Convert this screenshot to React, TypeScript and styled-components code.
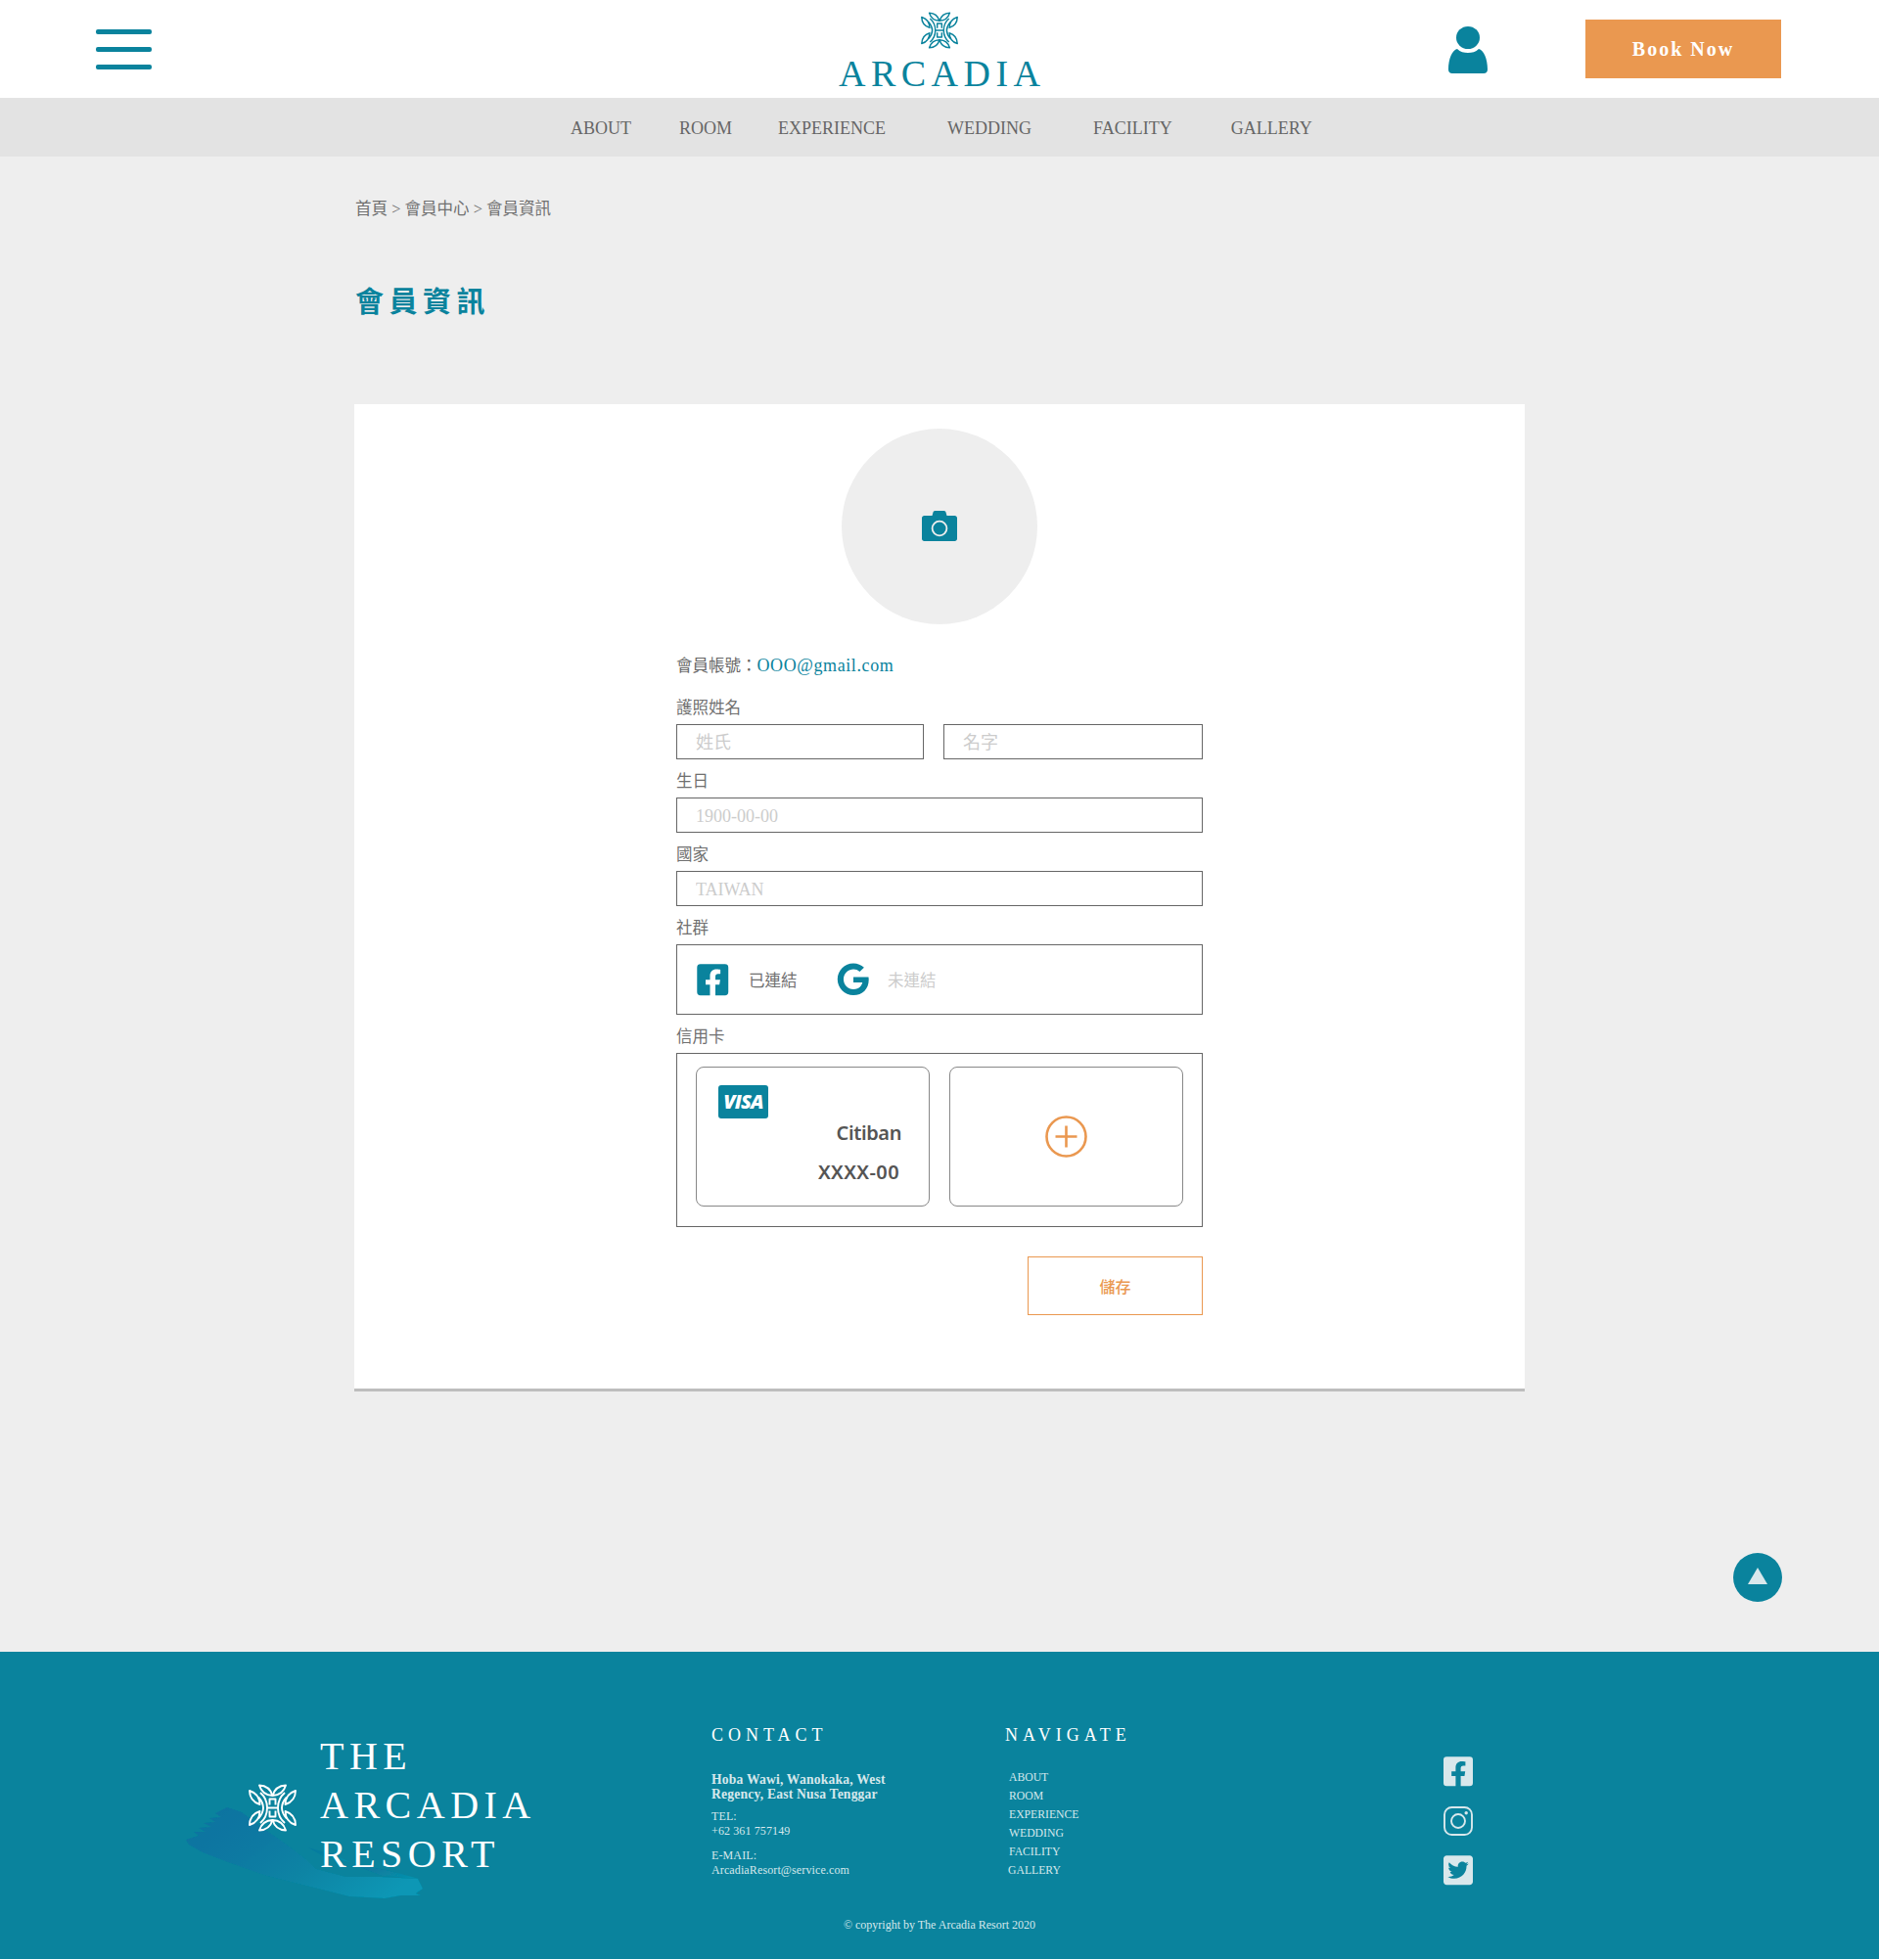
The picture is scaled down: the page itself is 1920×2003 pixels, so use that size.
import React from "react";
import styled, { createGlobalStyle } from "styled-components";
import { FaFacebookSquare, FaGoogle, FaTwitterSquare } from "react-icons/fa";

const TEAL = "#0a839d";
const ORANGE = "#ea9850";
const SERIF = `"Liberation Serif", "Noto Sans CJK TC", serif`;

const Global = createGlobalStyle`
  html, body { margin: 0; padding: 0; background: #fff; }
  * { box-sizing: border-box; }
  body { font-family: ${SERIF}; color: #666; }
`;

const Header = styled.header`
  height: 100px;
  background: #fff;
  display: grid;
  grid-template-columns: 1fr auto 1fr;
  align-items: center;
`;
const Burger = styled.div`
  margin-left: 98px;
  width: 57px;
  display: flex;
  flex-direction: column;
  gap: 13px;
  margin-top: 1px;
`;
const BurgerBar = styled.span`
  display: block;
  height: 5px;
  border-radius: 2px;
  background: ${TEAL};
`;
const Logo = styled.div`
  width: 206px;
  height: 100px;
  padding-top: 12px;
  display: flex;
  flex-direction: column;
  align-items: center;
  color: ${TEAL};
`;
const LogoText = styled.div`
  font-size: 38px;
  line-height: 38px;
  letter-spacing: 5.5px;
  margin-right: -5.5px;
  margin-top: 6px;
  white-space: nowrap;
`;
const HeaderRight = styled.div`
  display: flex;
  justify-content: flex-end;
  align-items: center;
  padding-right: 100px;
  gap: 100px;
`;
const UserWrap = styled.div`
  line-height: 0;
  margin-top: 2px;
`;
const BookNow = styled.a`
  width: 200px;
  height: 60px;
  background: ${ORANGE};
  color: #fff;
  font-size: 20px;
  font-weight: 700;
  letter-spacing: 2px;
  display: flex;
  align-items: center;
  justify-content: center;
`;
const NavBar = styled.nav`
  height: 60px;
  background: #e3e3e3;
  display: flex;
  align-items: center;
  padding-left: 583px;
  padding-top: 2px;
`;
const NavLink = styled.a<{ $gap: number }>`
  margin-left: ${(p) => p.$gap}px;
  font-size: 18px;
  color: #666;
  white-space: nowrap;
`;
const Main = styled.main`
  background: #eee;
  height: 1528px;
  display: flex;
  flex-direction: column;
  padding-top: 44px;
`;
const Container = styled.div`
  width: 1196px;
  margin: 0 auto;
`;
const Crumb = styled.div`
  font-size: 16.5px;
  line-height: 20px;
  color: #707070;
  padding-left: 1px;
`;
const Title = styled.h1`
  margin: 65px 0 84px 1px;
  font-size: 29px;
  line-height: 40px;
  letter-spacing: 5.5px;
  font-weight: 700;
  color: ${TEAL};
`;
const Card = styled.section`
  height: 1009px;
  background: #fff;
  border-bottom: 3px solid #bdbdbd;
  padding-top: 25px;
`;
const Avatar = styled.div`
  width: 200px;
  height: 200px;
  border-radius: 50%;
  background: #eee;
  margin: 0 auto;
  display: flex;
  align-items: center;
  justify-content: center;
  padding-bottom: 1px;
`;
const Form = styled.form`
  width: 538px;
  margin: 30px auto 0;
`;
const Account = styled.div`
  height: 24px;
  font-size: 16.5px;
  line-height: 24px;
  margin-bottom: 19px;
`;
const Email = styled.span`
  color: ${TEAL};
  font-size: 18px;
  letter-spacing: 0.6px;
`;
const Field = styled.div`
  margin-bottom: 10px;
`;
const Label = styled.div`
  font-size: 16.5px;
  line-height: 25px;
  height: 24px;
  margin-bottom: 5px;
  color: #707070;
`;
const Row = styled.div`
  display: flex;
  gap: 20px;
`;
const Input = styled.input<{ $w?: number }>`
  display: block;
  width: ${(p) => (p.$w ? `${p.$w}px` : "100%")};
  flex: ${(p) => (p.$w ? "none" : "1")};
  height: 36px;
  border: 1px solid #666;
  border-radius: 0;
  padding: 2px 19px 0;
  font-family: ${SERIF};
  font-size: 18px;
  outline: none;
  background: #fff;
  &::placeholder { color: #ccc; opacity: 1; }
`;
const SocialBox = styled.div`
  height: 72px;
  border: 1px solid #666;
  padding-left: 18px;
  display: flex;
  align-items: center;
  color: ${TEAL};
`;
const SocialStatus = styled.span<{ $off?: boolean; $gap: number; $after: number }>`
  font-size: 16.5px;
  margin-left: ${(p) => p.$gap}px;
  margin-right: ${(p) => p.$after}px;
  color: ${(p) => (p.$off ? "#ccc" : "#707070")};
`;
const CreditBox = styled.div`
  height: 178px;
  border: 1px solid #666;
  padding: 13px 19px 20px;
  display: flex;
  gap: 20px;
`;
const CreditCard = styled.div`
  width: 239px;
  height: 143px;
  border: 1px solid #888;
  border-radius: 8px;
  padding: 18px 0 0 22px;
  font-family: "Noto Sans", sans-serif;
  font-weight: 600;
  color: #555;
  font-size: 20px;
  line-height: 24px;
`;
const AddCard = styled(CreditCard)`
  padding: 0 0 1px;
  display: flex;
  align-items: center;
  justify-content: center;
`;
const Visa = styled.div`
  width: 51px;
  height: 34px;
  border-radius: 3px;
  background: ${TEAL};
  color: #fff;
  font-family: "Open Sans", sans-serif;
  font-weight: 800;
  font-style: italic;
  font-size: 20px;
  line-height: 34px;
  text-align: center;
  letter-spacing: -0.8px;
`;
const CardLine = styled.div<{ $top: number; $right: number; $ls: number }>`
  text-align: right;
  margin-top: ${(p) => p.$top}px;
  margin-right: ${(p) => p.$right}px;
  letter-spacing: ${(p) => p.$ls}px;
`;
const SaveRow = styled.div`
  display: flex;
  justify-content: flex-end;
  margin-top: 30px;
`;
const Save = styled.button`
  width: 179px;
  height: 60px;
  background: #fff;
  border: 1px solid ${ORANGE};
  color: ${ORANGE};
  font-family: ${SERIF};
  font-size: 16px;
  font-weight: 500;
`;
const ToTopRow = styled.div`
  display: flex;
  justify-content: flex-end;
  padding-right: 99px;
  margin-top: 165px;
`;
const ToTop = styled.a`
  width: 50px;
  height: 50px;
  border-radius: 50%;
  background: ${TEAL};
  display: flex;
  align-items: center;
  justify-content: center;
  padding-bottom: 4px;
`;
const Footer = styled.footer`
  position: relative;
  height: 314px;
  background: ${TEAL};
  color: #d6e8ec;
  padding-top: 73px;
  overflow: hidden;
`;
const Brush = styled.svg`
  position: absolute;
  left: 190px;
  top: 157px;
`;
const FooterRow = styled.div`
  position: relative;
  height: 195px;
  display: flex;
`;
const Brand = styled.div`
  width: 473px;
  margin-left: 254px;
  height: 150px;
  margin-top: 9px;
  display: flex;
  align-items: center;
  gap: 24px;
  color: #fff;
`;
const BrandMark = styled.div`
  margin-top: 5px;
  line-height: 0;
`;
const BrandText = styled.div`
  font-size: 40px;
  line-height: 50px;
  letter-spacing: 5.5px;
`;
const Column = styled.div<{ $w: number }>`
  width: ${(p) => p.$w}px;
`;
const FootHead = styled.div`
  font-size: 18px;
  line-height: 24px;
  letter-spacing: 5px;
  color: #fff;
  white-space: nowrap;
`;
const Address = styled.div`
  margin-top: 26px;
  font-size: 13.6px;
  font-weight: 700;
  line-height: 15px;
  letter-spacing: 0.2px;
`;
const Info = styled.div<{ $top: number }>`
  margin-top: ${(p) => p.$top}px;
  font-size: 12px;
  line-height: 15px;
  letter-spacing: 0.12px;
`;
const FootNav = styled.div`
  margin-top: 22px;
  padding-left: 4px;
`;
const FootLink = styled.div<{ $shift?: number }>`
  font-size: 11.7px;
  line-height: 19px;
  margin-left: ${(p) => p.$shift ?? 0}px;
`;
const Socials = styled.div`
  margin-top: 34px;
  display: flex;
  flex-direction: column;
  gap: 20.5px;
`;
const SocialCell = styled.div`
  width: 30px;
  height: 30px;
  display: flex;
  align-items: center;
  justify-content: center;
  color: #d9e8ec;
`;
const Copyright = styled.div`
  position: relative;
  text-align: center;
  font-size: 12px;
  line-height: 22px;
`;

const leaf = (x1: number, y1: number, x2: number, y2: number, b = 0.36) => {
  const mx = (x1 + x2) / 2, my = (y1 + y2) / 2;
  const dx = x2 - x1, dy = y2 - y1;
  const c1 = `${mx - dy * b} ${my + dx * b}`;
  const c2 = `${mx + dy * b} ${my - dx * b}`;
  return `M${x1} ${y1}Q${c1} ${x2} ${y2}Q${c2} ${x1} ${y1}Z`;
};

const Mark = ({ size, sw }: { size: number; sw: number }) => (
  <svg width={size} height={size} viewBox="0 0 49 49" fill="none" stroke="currentColor" strokeWidth={sw} strokeLinejoin="round">
    <path d={leaf(11, 1.5, 24.5, 12)} />
    <path d={leaf(38, 1.5, 24.5, 12)} />
    <path d={leaf(11, 47.5, 24.5, 37)} />
    <path d={leaf(38, 47.5, 24.5, 37)} />
    <path d={leaf(1, 7, 11.5, 21)} />
    <path d={leaf(1, 42, 11.5, 28)} />
    <path d={leaf(48, 7, 37.5, 21)} />
    <path d={leaf(48, 42, 37.5, 28)} />
    <path d="M12 9Q19 15 19 24.5Q19 34 12 40M37 9Q30 15 30 24.5Q30 34 37 40M19 24.5H30" />
    <path d="M10 13.5Q15 19 15 24.5Q15 30 10 35.5M39 13.5Q34 19 34 24.5Q34 30 39 35.5" />
    <path d="M21.5 21.5V15.5H27.5V21.5M21.5 27.5V33.5H27.5V27.5" />
  </svg>
);

const UserIcon = () => (
  <svg width="40" height="48" viewBox="0 0 40 48" fill={TEAL}>
    <ellipse cx="20" cy="11.5" rx="12" ry="11.5" />
    <path d="M9 23C12 26 16 27 20 27C24 27 28 26 31 23C36 24 40 33 40 44C40 46.5 38.5 48 36 48H4C1.5 48 0 46.5 0 44C0 33 4 24 9 23Z" />
  </svg>
);

const CameraIcon = () => (
  <svg width="36" height="31" viewBox="0 0 36 31">
    <path fill={TEAL} d="M2.5 5H10.5L11.5 1.5C11.8 .5 12.6 0 13.6 0H22.4C23.4 0 24.2 .5 24.5 1.5L25.5 5H33.5C35 5 36 6 36 7.5V28.5C36 30 35 31 33.5 31H2.5C1 31 0 30 0 28.5V7.5C0 6 1 5 2.5 5Z" />
    <ellipse cx="18" cy="18" rx="7.4" ry="7.4" fill="none" stroke="#eee" strokeWidth="1.8" />
  </svg>
);

const PlusIcon = () => (
  <svg width="43" height="43" viewBox="0 0 43 43" fill="none" stroke={ORANGE} strokeWidth="2.6">
    <circle cx="21.5" cy="21.5" r="20" />
    <path d="M21.5 10.5V32.5M10.5 21.5H32.5" />
  </svg>
);

const InstagramIcon = () => (
  <svg width="30" height="30" viewBox="0 0 30 30" fill="none" stroke="currentColor" strokeWidth="1.9">
    <rect x="1" y="1" width="28" height="28" rx="7.5" />
    <circle cx="15" cy="15" r="7" />
    <circle cx="23.2" cy="6.8" r="1.7" fill="currentColor" stroke="none" />
  </svg>
);

const NAV: [string, number][] = [
  ["ABOUT", 0], ["ROOM", 49], ["EXPERIENCE", 47], ["WEDDING", 63], ["FACILITY", 63], ["GALLERY", 60],
];
const FOOT_NAV = ["ABOUT", "ROOM", "EXPERIENCE", "WEDDING", "FACILITY"];

export default function App() {
  return (
    <>
      <Global />
      <Header>
        <Burger>
          <BurgerBar />
          <BurgerBar />
          <BurgerBar />
        </Burger>
        <Logo>
          <Mark size={38} sw={1.9} />
          <LogoText>ARCADIA</LogoText>
        </Logo>
        <HeaderRight>
          <UserWrap><UserIcon /></UserWrap>
          <BookNow>Book Now</BookNow>
        </HeaderRight>
      </Header>
      <NavBar>
        {NAV.map(([t, g]) => (
          <NavLink key={t} $gap={g}>{t}</NavLink>
        ))}
      </NavBar>
      <Main>
        <Container>
          <Crumb>首頁 &gt; 會員中心 &gt; 會員資訊</Crumb>
          <Title>會員資訊</Title>
          <Card>
            <Avatar><CameraIcon /></Avatar>
            <Form>
              <Account>會員帳號：<Email>OOO@gmail.com</Email></Account>
              <Field>
                <Label>護照姓名</Label>
                <Row>
                  <Input $w={253} placeholder="姓氏" />
                  <Input $w={265} placeholder="名字" />
                </Row>
              </Field>
              <Field>
                <Label>生日</Label>
                <Input placeholder="1900-00-00" />
              </Field>
              <Field>
                <Label>國家</Label>
                <Input placeholder="TAIWAN" />
              </Field>
              <Field>
                <Label>社群</Label>
                <SocialBox>
                  <FaFacebookSquare size={36.5} />
                  <SocialStatus $gap={18.5} $after={40.5}>已連結</SocialStatus>
                  <FaGoogle size={33.5} />
                  <SocialStatus $off $gap={18.5} $after={0}>未連結</SocialStatus>
                </SocialBox>
              </Field>
              <Label>信用卡</Label>
              <CreditBox>
                <CreditCard>
                  <Visa>VISA</Visa>
                  <CardLine $top={3} $right={28} $ls={-0.4}>Citiban</CardLine>
                  <CardLine $top={16} $right={30} $ls={0.4}>XXXX-00</CardLine>
                </CreditCard>
                <AddCard><PlusIcon /></AddCard>
              </CreditBox>
              <SaveRow><Save type="button">儲存</Save></SaveRow>
            </Form>
          </Card>
        </Container>
        <ToTopRow>
          <ToTop>
            <svg width="20" height="17" viewBox="0 0 20 17"><path d="M10 0L20 17H0Z" fill="#d9e8ec" /></svg>
          </ToTop>
        </ToTopRow>
      </Main>
      <Footer>
        <Brush width="245" height="100" viewBox="0 0 245 100">
          <defs>
            <linearGradient id="brush" x1="0" y1="0.2" x2="1" y2="0.7">
              <stop offset="0" stopColor="#0a72a0" />
              <stop offset="0.35" stopColor="#0a7aa2" />
              <stop offset="0.6" stopColor="#0a84a4" />
              <stop offset="1" stopColor="#0797b5" />
            </linearGradient>
            <filter id="soft"><feGaussianBlur stdDeviation="0.6" /></filter>
          </defs>
          <g fill="url(#brush)" filter="url(#soft)">
            <path d="M0 35L13 31L8 27L20 27L13 23L26 22L18 18L30 17L24 13L36 12L30 8L42 2L57 7L77 22L100 38L120 53L133 65L163 73L197 73L237 75L242 85L235 90L240 92L220 92L203 95L167 93L123 82L83 72L43 58L17 48L3 40Z" />
            <path d="M125 43L150 50L168 58L140 52Z" opacity="0.5" />
            <path d="M170 60L205 66L238 75L200 72Z" opacity="0.7" />
          </g>
        </Brush>
        <FooterRow>
          <Brand>
            <BrandMark><Mark size={49} sw={1.9} /></BrandMark>
            <BrandText>THE<br />ARCADIA<br />RESORT</BrandText>
          </Brand>
          <Column $w={300}>
            <FootHead>CONTACT</FootHead>
            <Address>Hoba Wawi, Wanokaka, West<br />Regency, East Nusa Tenggar</Address>
            <Info $top={8}>TEL:<br />+62 361 757149</Info>
            <Info $top={10}>E-MAIL:<br />ArcadiaResort@service.com</Info>
          </Column>
          <Column $w={448}>
            <FootHead>NAVIGATE</FootHead>
            <FootNav>
              {FOOT_NAV.map((t) => <FootLink key={t}>{t}</FootLink>)}
              <FootLink $shift={-1}>GALLERY</FootLink>
            </FootNav>
          </Column>
          <Socials>
            <SocialCell><FaFacebookSquare size={34.3} /></SocialCell>
            <SocialCell><InstagramIcon /></SocialCell>
            <SocialCell><FaTwitterSquare size={34.3} /></SocialCell>
          </Socials>
        </FooterRow>
        <Copyright>© copyright by The Arcadia Resort 2020</Copyright>
      </Footer>
    </>
  );
}
